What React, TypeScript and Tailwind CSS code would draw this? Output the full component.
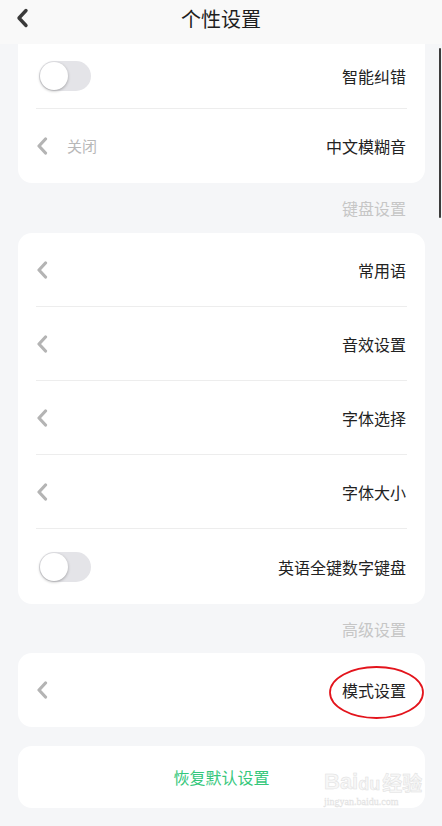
import React from "react";

const font = { fontFamily: '"Noto Sans CJK SC", "Noto Sans", sans-serif' };

function Chevron({ className }: { className?: string }) {
  return (
    <svg width="12" height="18" viewBox="0 0 12 18" className={className}>
      <path d="M9.5 2 L3 9 L9.5 16" fill="none" stroke="currentColor" strokeWidth="3.2" strokeLinecap="round" strokeLinejoin="round" />
    </svg>
  );
}

function Toggle() {
  return (
    <div className="relative w-[52px] h-[30px] rounded-full bg-[#e4e4e8]">
      <div className="absolute left-[1px] top-[1px] w-[28px] h-[28px] rounded-full bg-white shadow-[0_1px_3px_rgba(0,0,0,0.3)]" />
    </div>
  );
}

function Row({
  label,
  left,
  height = "h-[73px]",
  divider = true,
}: {
  label: string;
  left: React.ReactNode;
  height?: string;
  divider?: boolean;
}) {
  return (
    <div>
      <div className={`flex items-center justify-between pl-[18px] pr-[19px] ${height}`}>
        <div className="flex items-center">{left}</div>
        <span className="text-[16px] text-[#222]">{label}</span>
      </div>
      {divider && <div className="mx-[18px] h-px bg-[#ededed]" />}
    </div>
  );
}

const chev = <Chevron className="text-[#b4b4b4]" />;

export default function App() {
  return (
    <div className="relative w-[442px] h-[826px] overflow-hidden bg-[#f5f6f8]" style={font}>
      {/* header */}
      <div className="relative h-[44px] bg-[#f9f9f9] flex items-center justify-center">
        <svg width="14" height="20" viewBox="0 0 14 20" className="absolute left-[15px] top-[8px] text-[#3a3a3a]">
          <path d="M11 2.5 L4 10 L11 17.5" fill="none" stroke="currentColor" strokeWidth="3.4" strokeLinecap="round" strokeLinejoin="round" />
        </svg>
        <span className="text-[20px] text-[#1e1e1e] -mt-[6px]">个性设置</span>
      </div>

      {/* scroll indicator */}
      <div className="absolute right-[1px] top-[48px] w-[2px] h-[170px] rounded-full bg-[#3c3c3c]" />

      <div className="pl-[18px] pr-[17px]">
        {/* card 1 */}
        <div className="bg-white rounded-b-[14px]">
          <Row label="智能纠错" height="h-[64px]" left={<div className="pl-[3px]"><Toggle /></div>} />
          <Row
            label="中文模糊音"
            height="h-[74px]"
            divider={false}
            left={
              <>
                {chev}
                <span className="ml-[19px] text-[15px] text-[#b8b8b8]">关闭</span>
              </>
            }
          />
        </div>

        <div className="h-[50px] flex items-center justify-end pr-[19px]">
          <span className="text-[16px] text-[#c6c6c6]">键盘设置</span>
        </div>

        {/* card 2 */}
        <div className="bg-white rounded-[14px] overflow-hidden">
          <Row label="常用语" left={chev} />
          <Row label="音效设置" left={chev} />
          <Row label="字体选择" left={chev} />
          <Row label="字体大小" left={chev} />
          <Row label="英语全键数字键盘" height="h-[75px]" divider={false} left={<div className="pl-[3px]"><Toggle /></div>} />
        </div>

        <div className="h-[49px] flex items-center justify-end pr-[19px]">
          <span className="text-[16px] text-[#c6c6c6]">高级设置</span>
        </div>

        {/* card 3 */}
        <div className="relative bg-white rounded-[14px]">
          <Row label="模式设置" height="h-[74px]" divider={false} left={chev} />
          <svg className="absolute left-[310px] top-[12px]" width="97" height="55" viewBox="0 0 97 55">
            <ellipse cx="48.5" cy="27.5" rx="46.5" ry="25.5" fill="none" stroke="#e3141c" strokeWidth="1.8" />
          </svg>
        </div>

        {/* card 4 */}
        <div className="mt-[19px] h-[62px] bg-white rounded-[14px] flex items-center justify-center">
          <span className="text-[16px] text-[#35c77b]">恢复默认设置</span>
        </div>
      </div>

      {/* watermark */}
      <div className="absolute left-[324px] top-[771px] flex flex-col items-start pointer-events-none">
        <div className="flex items-end leading-none text-[#f7f7f7]" style={{ WebkitTextStroke: "0.5px #e0e0e0" }}>
          <span className="text-[22px] font-bold" style={{ fontFamily: '"Liberation Sans", sans-serif' }}>Bai</span>
          <span className="text-[18px] font-bold" style={{ fontFamily: '"Liberation Sans", sans-serif' }}>du</span>
          <span className="ml-[2px] text-[20px] font-bold">经验</span>
        </div>
        <span className="text-[10px] text-[#eeeeee] leading-none mt-[4px]" style={{ fontFamily: '"Liberation Serif", serif', WebkitTextStroke: "0.3px #dedede" }}>
          jingyan.baidu.com
        </span>
      </div>
    </div>
  );
}
